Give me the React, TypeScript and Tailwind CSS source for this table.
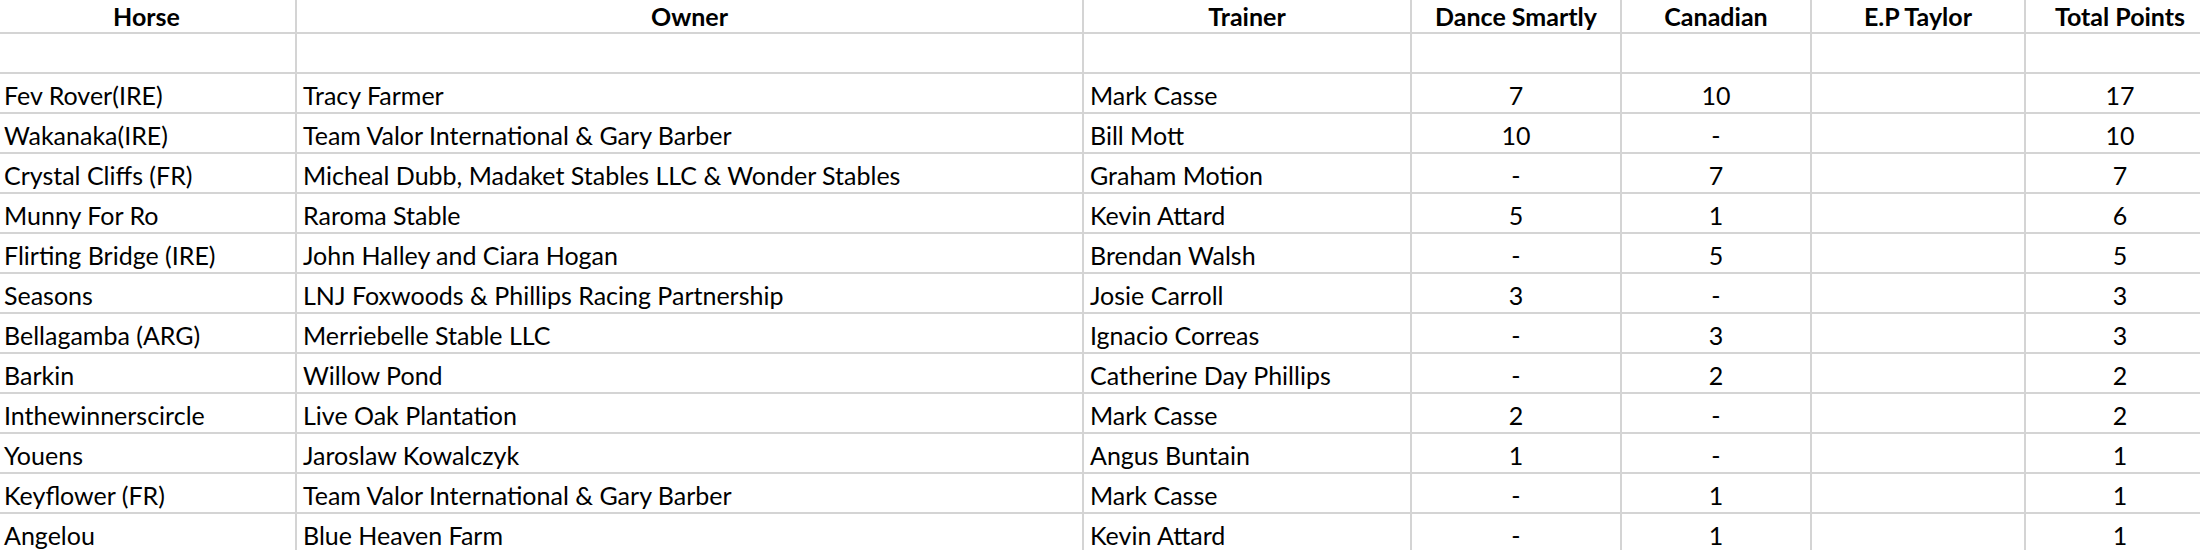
const headers = ['Horse', 'Owner', 'Trainer', 'Dance Smartly', 'Canadian', 'E.P Taylor', 'Total Points'];

const rows: string[][] = [
    ['Fev Rover(IRE)', 'Tracy Farmer', 'Mark Casse', '7', '10', '', '17'],
    ['Wakanaka(IRE)', 'Team Valor International & Gary Barber', 'Bill Mott', '10', '-', '', '10'],
    ['Crystal Cliffs (FR)', 'Micheal Dubb, Madaket Stables LLC & Wonder Stables', 'Graham Motion', '-', '7', '', '7'],
    ['Munny For Ro', 'Raroma Stable', 'Kevin Attard', '5', '1', '', '6'],
    ['Flirting Bridge (IRE)', 'John Halley and Ciara Hogan', 'Brendan Walsh', '-', '5', '', '5'],
    ['Seasons', 'LNJ Foxwoods & Phillips Racing Partnership', 'Josie Carroll', '3', '-', '', '3'],
    ['Bellagamba (ARG)', 'Merriebelle Stable LLC', 'Ignacio Correas', '-', '3', '', '3'],
    ['Barkin', 'Willow Pond', 'Catherine Day Phillips', '-', '2', '', '2'],
    ['Inthewinnerscircle', 'Live Oak Plantation', 'Mark Casse', '2', '-', '', '2'],
    ['Youens', 'Jaroslaw Kowalczyk', 'Angus Buntain', '1', '-', '', '1'],
    ['Keyflower (FR)', 'Team Valor International & Gary Barber', 'Mark Casse', '-', '1', '', '1'],
    ['Angelou', 'Blue Heaven Farm', 'Kevin Attard', '-', '1', '', '1'],
];

const grid = 'grid grid-cols-[299px_787px_328px_210px_190px_214px_190px]';
const cell = 'border-r-2 border-b-2 border-[#d4d4d4] px-[6px] whitespace-nowrap overflow-hidden';

export default function App() {
    return (
        <div className="h-[550px] w-full overflow-hidden bg-white text-black font-['Lato',sans-serif] text-[25px] leading-[28px]">
            <div className={`${grid} -ml-[2px] w-max`}>
                {headers.map((h) => (
                    <div key={h} className={`${cell} h-[34px] flex items-center justify-center font-bold`}>
                        {h}
                    </div>
                ))}
                {headers.map((h) => (
                    <div key={'empty-' + h} className={`${cell} h-[40px]`} />
                ))}
                {rows.map((r, i) =>
                    r.map((v, j) => (
                        <div
                            key={i + '-' + j}
                            className={`${cell} h-[40px] pt-[7px] ${j > 2 ? 'text-center' : 'text-left'}`}
                        >
                            {v}
                        </div>
                    ))
                )}
            </div>
        </div>
    );
}
